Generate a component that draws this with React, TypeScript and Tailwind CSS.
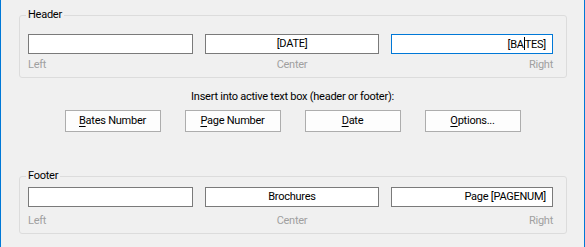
const FONT = "font-['Roboto',sans-serif] text-[11px] tracking-[-0.25px]"

type Row = { center: string; right: string; active?: boolean }

function Group({ title, row, top, labelTop }: { title: string; row: Row; top: string; labelTop: string }) {
  return (
    <fieldset className="ml-[18px] w-[548px] rounded-[3px] border border-[#dcdcdc] pl-2 pr-3 pb-[4px]">
      <legend className="-ml-[2px] px-[2px] leading-4 text-black">{title}</legend>
      <div className={`grid grid-cols-[165px_174px_162px] gap-x-3 ${top}`}>
        <div className="h-5 border border-[#7a7a7a] bg-white" />
        <div className="flex h-5 items-center justify-center border border-[#7a7a7a] bg-white text-black">
          {row.center}
        </div>
        <div
          className={`flex h-5 items-center justify-end border bg-white pr-[6px] text-black ${
            row.active ? 'border-[#0078d7]' : 'border-[#7a7a7a]'
          }`}
        >
          {row.active ? (
            <span>
              [BA
              <span className="inline-block h-[13px] w-px translate-y-[2px] bg-black" />
              TES]
            </span>
          ) : (
            row.right
          )}
        </div>
        <span className={`leading-4 text-[#a0a0a0] ${labelTop}`}>Left</span>
        <span className={`leading-4 text-center text-[#a0a0a0] ${labelTop}`}>Center</span>
        <span className={`leading-4 text-right text-[#a0a0a0] ${labelTop}`}>Right</span>
      </div>
    </fieldset>
  )
}

const BUTTONS = [
  { key: 'B', rest: 'ates Number' },
  { key: 'P', rest: 'age Number' },
  { key: 'D', rest: 'ate' },
  { key: 'O', rest: 'ptions...' },
]

export default function App() {
  return (
    <div className={`h-[247px] w-[585px] border-x border-[#0078d7] bg-[#f0f0f0] pt-[7px] ${FONT}`}>
      <Group
        title="Header"
        top="mt-[11px]"
        labelTop="mt-[3px]"
        row={{ center: '[DATE]', right: '[BATES]', active: true }}
      />

      <p className="mt-[11px] text-center leading-4 text-black">Insert into active text box (header or footer):</p>

      <div className="mt-[5px] flex justify-center gap-6">
        {BUTTONS.map(b => (
          <button
            key={b.key}
            className="h-[22px] w-24 border border-[#adadad] bg-[#fdfdfd] text-black"
          >
            <u className="underline-offset-2">{b.key}</u>
            {b.rest}
          </button>
        ))}
      </div>

      <div className="mt-[36px]">
        <Group
          title="Footer"
          top="mt-[3px]"
          labelTop="mt-[6px]"
          row={{ center: 'Brochures', right: 'Page [PAGENUM]' }}
        />
      </div>
    </div>
  )
}
